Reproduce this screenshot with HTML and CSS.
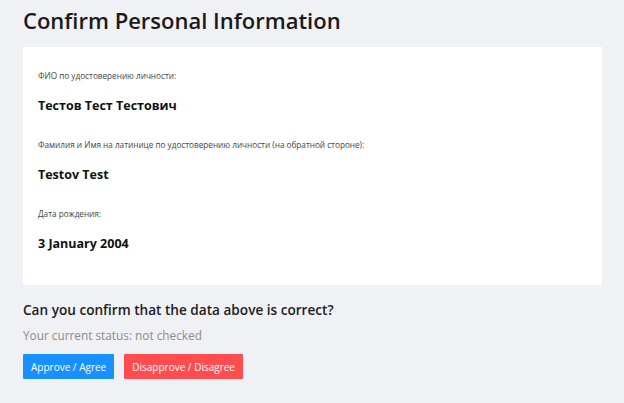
FILE: index.html
```html
<!DOCTYPE html>
<html lang="ru">
<head>
<meta charset="utf-8">
<link rel="stylesheet" href="styles.css">
</head>
<body>
<main class="page">
  <h1 class="title">Confirm Personal Information</h1>
  <section class="card">
    <div class="field">
      <div class="label">ФИО по удостоверению личности:</div>
      <div class="value">Тестов Тест Тестович</div>
    </div>
    <div class="field">
      <div class="label">Фамилия и Имя на латинице по удостоверению личности (на обратной стороне):</div>
      <div class="value">Testov Test</div>
    </div>
    <div class="field">
      <div class="label">Дата рождения:</div>
      <div class="value">3 January 2004</div>
    </div>
  </section>
  <h2 class="question">Can you confirm that the data above is correct?</h2>
  <p class="status">Your current status: not checked</p>
  <div class="actions">
    <button class="btn btn-approve">Approve / Agree</button>
    <button class="btn btn-reject">Disapprove / Disagree</button>
  </div>
</main>
</body>
</html>
```

FILE: styles.css
```css
html, body {
  margin: 0;
  padding: 0;
}
body {
  background: #f0f1f5;
  font-family: "Open Sans", "Noto Sans", sans-serif;
  color: #1c1c1c;
}
.page {
  padding: 4px 22px 0 23px;
}
.title {
  margin: 0;
  font-size: 22px;
  font-weight: 600;
  line-height: 32px;
  color: #1a1a1a;
}
.card {
  margin-top: 11px;
  background: #ffffff;
  padding: 22px 15px 31px;
  display: flex;
  flex-direction: column;
  gap: 22px;
}
.field {
  display: flex;
  flex-direction: column;
  gap: 13px;
}
.label {
  font-size: 8.2px;
  line-height: 14px;
  color: #444;
}
.value {
  font-size: 12.5px;
  font-weight: 700;
  line-height: 20px;
  color: #111;
}
.question {
  margin: 13px 0 0;
  font-size: 13.6px;
  font-weight: 600;
  line-height: 24px;
  color: #1c1c1c;
}
.status {
  margin: 3px 0 0;
  font-size: 11.8px;
  line-height: 20px;
  color: #8c8c8c;
}
.actions {
  display: flex;
  gap: 10px;
  margin-top: 9px;
}
.btn {
  border: none;
  border-radius: 1px;
  height: 25px;
  padding: 0 8px;
  font-family: inherit;
  font-size: 10px;
  color: #fff;
}
.btn-approve {
  background: #1890ff;
}
.btn-reject {
  background: #ff4d4f;
}
```
